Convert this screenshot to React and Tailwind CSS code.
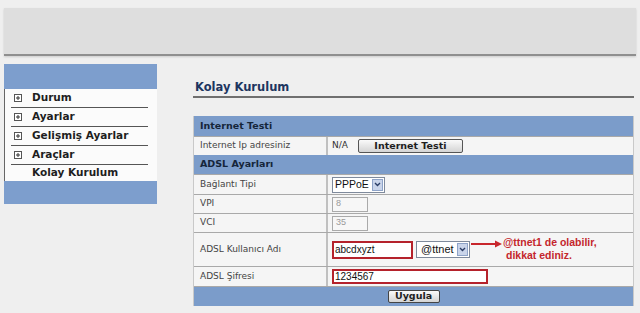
import React from "react";

const verdana = "font-['DejaVu_Sans',Verdana,sans-serif]";
const arial = "font-['Liberation_Sans',Arial,sans-serif]";

function PlusBox() {
  return (
    <span className="w-[8px] h-[8px] border border-[#555] bg-white flex items-center justify-center shrink-0">
      <svg width="6" height="6" viewBox="0 0 6 6">
        <path d="M3 1v4M1 3h4" stroke="#333" strokeWidth="1" />
      </svg>
    </span>
  );
}

function SelectArrow() {
  return (
    <span className="w-[11px] self-stretch my-[1px] mr-[1px] bg-[#c9d4ea] border border-[#8ea3c8] flex items-center justify-center shrink-0">
      <svg width="7" height="5" viewBox="0 0 7 5">
        <path d="M1 1l2.5 2.5L6 1" stroke="#2b3d66" strokeWidth="1.4" fill="none" />
      </svg>
    </span>
  );
}

const menu = [
  { label: "Durum" },
  { label: "Ayarlar" },
  { label: "Gelişmiş Ayarlar" },
  { label: "Araçlar" },
];

function Sidebar() {
  return (
    <div className="w-[153px] ml-[4px] shrink-0">
      <div className="h-[25px] bg-[#7d9ecd]" />
      <div className="bg-[#fbfbfb] border-l border-[#666] pl-[6px] pr-[9px]">
        {menu.map((m) => (
          <div
            key={m.label}
            className="h-[19px] flex items-center gap-[10px] pl-[3px] border-b border-[#555]"
          >
            <PlusBox />
            <span className={`${verdana} text-[10.5px] font-bold text-[#1e1e1e]`}>
              {m.label}
            </span>
          </div>
        ))}
        <div className="h-[16px] flex items-center pl-[21px]">
          <span className={`${verdana} text-[10.5px] font-bold text-[#1e1e1e]`}>
            Kolay Kurulum
          </span>
        </div>
      </div>
      <div className="h-[23px] bg-[#7d9ecd]" />
    </div>
  );
}

function Row({ label, h = "h-[19px]", children }) {
  return (
    <div className={`${h} flex border-t border-[#a9a9a9] bg-[#f5f5f5]`}>
      <div
        className={`w-[134px] shrink-0 flex items-center pl-[6px] border-r-2 border-[#c0c0c0] ${verdana} text-[9px] text-[#444]`}
      >
        {label}
      </div>
      <div className="flex-1 flex items-center pl-[4px]">{children}</div>
    </div>
  );
}

function Header({ children }) {
  return (
    <div
      className={`h-[19px] bg-[#7b9cca] flex items-center pl-[6px] ${verdana} text-[9.5px] font-bold text-[#15253a]`}
    >
      {children}
    </div>
  );
}

function MainPanel() {
  return (
    <div className="ml-[36px] w-[441px]">
      <div className="mt-[16px] pl-[2px] h-[16px] flex items-center">
        <span className={`${verdana} text-[11.5px] font-bold text-[#1d3560]`}>
          Kolay Kurulum
        </span>
      </div>
      <div className="h-[2px] bg-[#6f6f6f]" />

      <div className="mt-[18px] border-r border-l border-[#c9c9c9]">
        <div className="h-[20px] bg-[#7b9cca] flex items-center pl-[6px]">
          <span className={`${verdana} text-[9.5px] font-bold text-[#15253a]`}>
            Internet Testi
          </span>
        </div>
        <Row label="Internet Ip adresiniz">
          <span className={`${verdana} text-[9px] text-[#333]`}>N/A</span>
          <button
            className={`ml-[10px] w-[105px] h-[14px] rounded-[2px] border border-[#555] bg-gradient-to-b from-[#fafafa] to-[#d4d4d4] flex items-center justify-center ${verdana} text-[9.5px] font-bold text-[#1e1e1e]`}
          >
            Internet Testi
          </button>
        </Row>
        <Header>ADSL Ayarları</Header>
        <Row label="Bağlantı Tipi" h="h-[20px]">
          <div className="w-[53px] h-[16px] border border-[#7f8a9c] bg-white flex items-center pl-[2px]">
            <span className={`${arial} text-[10.5px] text-[#111] flex-1`}>PPPoE</span>
            <SelectArrow />
          </div>
        </Row>
        <Row label="VPI">
          <div className="w-[36px] h-[15px] border border-[#aaa] bg-[#f7f7f7] flex items-center pl-[3px]">
            <span className={`${arial} text-[9px] text-[#9a9a9a]`}>8</span>
          </div>
        </Row>
        <Row label="VCI">
          <div className="w-[36px] h-[15px] border border-[#aaa] bg-[#f7f7f7] flex items-center pl-[3px]">
            <span className={`${arial} text-[9px] text-[#9a9a9a]`}>35</span>
          </div>
        </Row>
        <Row label="ADSL Kullanıcı Adı" h="h-[34px]">
          <div className="w-[81px] h-[18px] border-2 border-[#b5222b] bg-white flex items-center pl-[1px]">
            <span className={`${arial} text-[10px] text-[#111]`}>abcdxyzt</span>
          </div>
          <div className="ml-[3px] w-[54px] h-[17px] border border-[#7f8a9c] bg-white flex items-center pl-[4px]">
            <span className={`${arial} text-[11px] text-[#111] flex-1`}>@ttnet</span>
            <SelectArrow />
          </div>
          <svg width="32" height="8" viewBox="0 0 32 8" className="ml-[1px] -mt-[11px] shrink-0">
            <path d="M0 4h25" stroke="#c8262c" strokeWidth="2" />
            <path d="M24 0.5L31 4L24 7.5z" fill="#c8262c" />
          </svg>
          <div className={`${arial} text-[10.5px] font-bold text-[#c4262c] leading-[13px] -mt-[2px]`}>
            <div>@ttnet1 de olabilir,</div>
            <div className="pl-[3px]">dikkat ediniz.</div>
          </div>
        </Row>
        <Row label="ADSL Şifresi" h="h-[20px]">
          <div className="w-[156px] h-[15px] border-2 border-[#b5222b] bg-white flex items-center pl-[1px]">
            <span className={`${arial} text-[10px] text-[#111]`}>1234567</span>
          </div>
        </Row>
        <div className="h-[20px] bg-[#7b9cca] border-t border-[#a9a9a9] flex items-center justify-center">
          <button
            className={`w-[52px] h-[13px] rounded-[2px] border border-[#444] bg-gradient-to-b from-[#fafafa] to-[#d4d4d4] flex items-center justify-center ${verdana} text-[9.5px] font-bold text-[#1e1e1e]`}
          >
            Uygula
          </button>
        </div>
      </div>
    </div>
  );
}

export default function App() {
  return (
    <div className="w-[640px] h-[313px] bg-[#efefef] overflow-hidden pt-[8px]">
      <div className="mx-[4px] h-[48px] bg-[#dedede] border-b-2 border-[#8f8f8f] shadow-[0_1px_2px_rgba(0,0,0,0.15)]" />
      <div className="flex mt-[8px]">
        <Sidebar />
        <MainPanel />
      </div>
    </div>
  );
}
